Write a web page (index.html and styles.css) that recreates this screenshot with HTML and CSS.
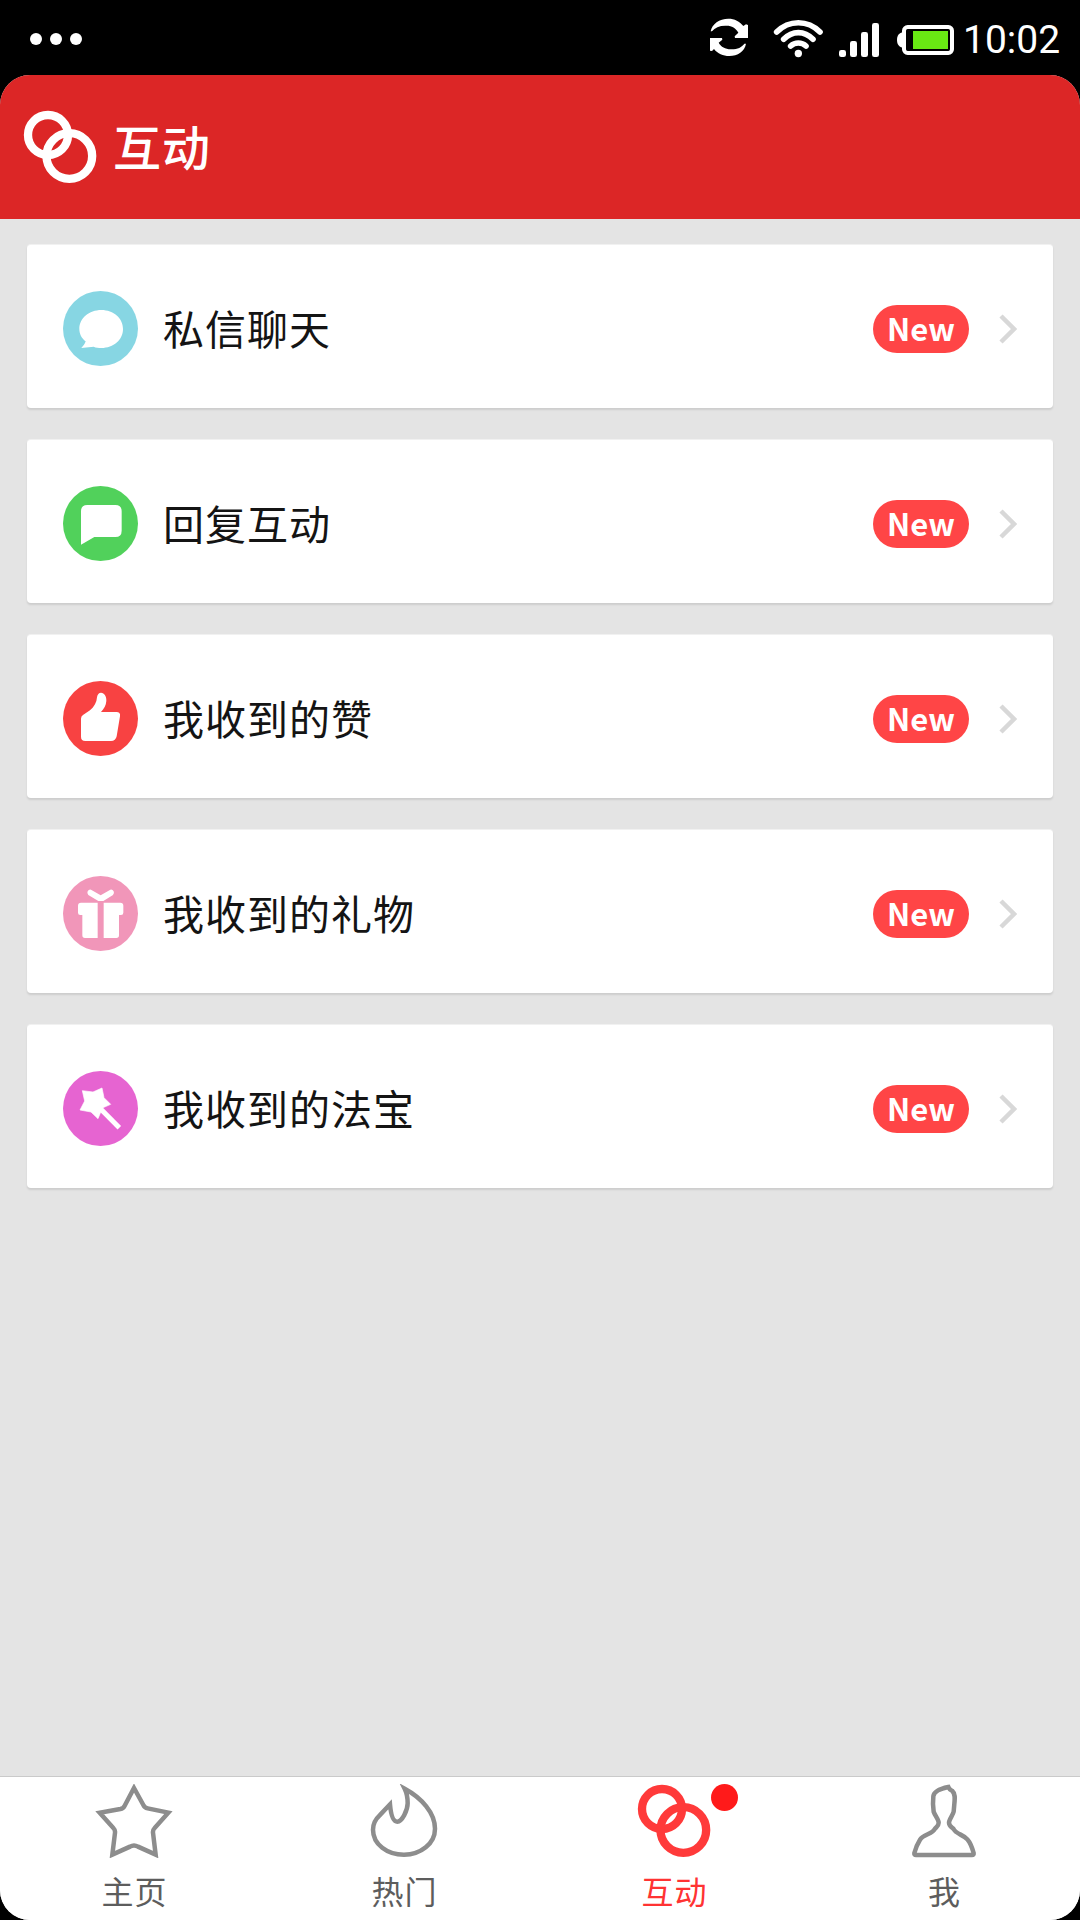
FILE: index.html
```html
<!DOCTYPE html>
<html lang="zh-CN">
<head>
<meta charset="utf-8">
<title>互动</title>
<link rel="stylesheet" href="styles.css">
</head>
<body>
<div class="screen">
  <div class="status">
    <div class="dots"><i></i><i></i><i></i></div>
    <div class="tray">
      <svg class="sync" viewBox="57 54 120 120" fill="#fff">
        <path d="M62 94C66 72 88 56 115 56C134 56 149 64 160 78L168 73L174 75V114H135L134 109L145 98C137 84 126 77 110 77C90 76 75 82 66 94Z"/>
        <path d="M168 131C164 154 143 168 118 168C99 168 83 161 72 147L66 153L60 152V114H96L97 119L86 128C93 141 106 147 122 148C141 149 155 142 163 131Z"/>
      </svg>
      <svg class="wifi" viewBox="249 54 153 120" fill="none" stroke="#fff" stroke-width="17" stroke-linecap="round">
        <path d="M260 96C297 59 353 59 390 96"/>
        <path d="M281 118C307 91 343 91 369 118"/>
        <path d="M302 138C315 126 335 126 348 138"/>
        <circle cx="325" cy="160.500" r="11" fill="#fff" stroke="none"/>
      </svg>
      <svg class="signal" viewBox="444 54 126 120" fill="#fff">
        <rect x="447" y="150" width="21" height="21" rx="7"/>
        <rect x="480" y="123" width="21" height="48" rx="7"/>
        <rect x="513" y="96" width="21" height="75" rx="7"/>
        <rect x="546" y="69" width="21" height="102" rx="7"/>
      </svg>
      <svg class="battery" viewBox="618 54 177 120">
        <path d="M640 97C627 98 621 107 621 120S627 142 640 143Z" fill="#fff"/>
        <rect x="642" y="81" width="144" height="78" rx="11" fill="#000" stroke="#fff" stroke-width="12"/>
        <rect x="669" y="93" width="105" height="54" fill="#69e813"/>
      </svg>
      <span class="clock">10:02</span>
    </div>
  </div>

  <div class="app">
    <header class="header">
      <svg class="logo" viewBox="66 327 228 228" fill="none" stroke="#fff" stroke-width="25">
        <circle cx="144" cy="405" r="60"/>
        <circle cx="208" cy="468" r="68.500"/>
      </svg>
      <h1>互动</h1>
    </header>

    <main class="list">
      <div class="card">
        <svg class="icon" viewBox="189 183 225 225">
          <circle cx="301.500" cy="295.500" r="112.500" fill="#87d6e3"/>
          <path d="M304 240C341 240 369 265 369 297S341 354 304 354C296 354 288 353 281 350L244 354C250 348 255 341 257 334C245 325 238 312 238 297C238 265 267 240 304 240Z" fill="#fff"/>
        </svg>
        <span class="label">私信聊天</span>
        <span class="badge">New</span>
        <svg class="chevron" viewBox="0 0 18 30"><path d="M2 2L15 15L2 28"/></svg>
      </div>
      <div class="card">
        <svg class="icon" viewBox="69 78 225 225">
          <circle cx="181.500" cy="190.500" r="112.500" fill="#51d15b"/>
          <path d="M142 135H226Q245 135 245 154V212Q245 231 226 231H163L123 254V154Q123 135 142 135Z" fill="#fff"/>
        </svg>
        <span class="label">回复互动</span>
        <span class="badge">New</span>
        <svg class="chevron" viewBox="0 0 18 30"><path d="M2 2L15 15L2 28"/></svg>
      </div>
      <div class="card">
        <svg class="icon" viewBox="69 63 225 225">
          <circle cx="181.500" cy="175.500" r="112.500" fill="#f84242"/>
          <path d="M123 176Q123 169 129 165L150 151C163 140 170 128 171 112C172 103 177 98 183 98C193 98 200 109 199 123C198 137 192 146 183 156H229Q242 156 240 169L230 229Q227 243 213 243H136Q123 243 123 230Z" fill="#fff"/>
        </svg>
        <span class="label">我收到的赞</span>
        <span class="badge">New</span>
        <svg class="chevron" viewBox="0 0 18 30"><path d="M2 2L15 15L2 28"/></svg>
      </div>
      <div class="card">
        <svg class="icon" viewBox="69 78 225 225">
          <circle cx="181.500" cy="190.500" r="112.500" fill="#f196b9"/>
          <g fill="#fff">
            <path d="M123 158H173V264H135Q127 264 127 256V195H121Q114 195 114 188V167Q114 158 123 158Z"/>
            <path d="M191 158H241Q250 158 250 167V188Q250 195 243 195H237V256Q237 264 229 264H191Z"/>
            <path d="M153 119L182 136L211 119Q217 117 221 124Q224 131 219 135L190 153H175L145 135Q140 131 143 124Q147 117 153 119Z"/>
          </g>
        </svg>
        <span class="label">我收到的礼物</span>
        <span class="badge">New</span>
        <svg class="chevron" viewBox="0 0 18 30"><path d="M2 2L15 15L2 28"/></svg>
      </div>
      <div class="card">
        <svg class="icon" viewBox="69 63 225 225">
          <circle cx="181.500" cy="175.500" r="112.500" fill="#e664d1"/>
          <g fill="#fff" stroke="#fff" stroke-linejoin="round">
            <path d="M127 122L159 126L186 114L192 143L212 163L187 174L174 206L153 186L120 180L134 153Z" stroke-width="2"/>
            <path d="M180 175L238 233" stroke-width="15"/>
          </g>
        </svg>
        <span class="label">我收到的法宝</span>
        <span class="badge">New</span>
        <svg class="chevron" viewBox="0 0 18 30"><path d="M2 2L15 15L2 28"/></svg>
      </div>
    </main>

    <nav class="tabs">
      <div class="tab">
        <svg class="tab-icon" viewBox="105 72 240 222">
          <path d="M222 84L250 135Q254 143 263 145L325 158L284 204Q278 210 279 218L287 284L234 260Q222 253 210 260L157 284L165 218Q166 210 160 204L119 158L181 147Q190 145 194 137Z"/>
        </svg>
        <span>主页</span>
      </div>
      <div class="tab">
        <svg class="tab-icon" viewBox="915 72 240 222">
          <path d="M1034 86C1084 113 1125 158 1125 206C1125 251 1082 284 1032 284S939 253 939 209C939 189 948 176 959 166L990 133C992 156 996 185 1012 185C1026 185 1043 151 1043 130C1043 113 1040 98 1034 86Z"/>
        </svg>
        <span>热门</span>
      </div>
      <div class="tab active">
        <svg class="tab-icon rings" viewBox="105 72 240 222">
          <circle cx="186" cy="147" r="60"/>
          <circle cx="250" cy="210" r="68.500"/>
        </svg>
        <b class="dot"></b>
        <span>互动</span>
      </div>
      <div class="tab">
        <svg class="tab-icon" viewBox="915 72 240 222">
          <path d="M1045 81C1020 86 1002 93 1000 109L999 132L1001 155C1005 167 1016 178 1016 188C1016 197 1010 200 1005 206C998 223 971 222 960 239C951 253 947 265 943 279Q942 285 948 285H1116Q1122 285 1121 279C1117 265 1111 248 1103 239C1090 223 1068 223 1060 206C1053 200 1047 197 1047 188C1047 178 1059 165 1061 155L1063 132C1065 113 1066 101 1057 93Q1048 89 1045 81Z"/>
        </svg>
        <span>我</span>
      </div>
    </nav>
  </div>
</div>
</body>
</html>
```

FILE: styles.css
```css
* { box-sizing: border-box; }

body {
  margin: 0;
  background: #000;
  font-family: "Noto Sans CJK SC", sans-serif;
}

svg { display: block; flex: none; }

.screen {
  width: 1080px;
  height: 1920px;
  display: flex;
  flex-direction: column;
  overflow: hidden;
}

/* Status bar */
.status {
  height: 75px;
  flex: none;
  padding: 0 19px 0 30px;
  display: flex;
  justify-content: space-between;
}
.dots { display: flex; gap: 8px; padding-top: 33px; }
.dots i { width: 12px; height: 12px; border-radius: 50%; background: #fff; }
.tray { display: flex; padding-top: 18px; height: 58px; }
.sync { width: 40px; height: 40px; margin-right: 24px; }
.wifi { width: 51px; height: 40px; margin-right: 14px; }
.signal { width: 42px; height: 40px; margin-right: 16px; }
.battery { width: 59px; height: 40px; }
.clock {
  width: 106px;
  padding-left: 8px;
  font: 400 39px/45px Roboto, sans-serif;
  color: #fff;
  white-space: nowrap;
}

/* App window */
.app {
  flex: 1;
  display: flex;
  flex-direction: column;
  border-radius: 30px;
  overflow: hidden;
  background: #e4e4e4;
}
.header {
  height: 144px;
  flex: none;
  display: flex;
  align-items: center;
  gap: 15px;
  padding: 0 22px;
  background: #dc2626;
  color: #fff;
}
.logo { width: 76px; height: 76px; }
.header h1 {
  margin: 0 0 4px;
  font-size: 48px;
  font-weight: 500;
  line-height: 70px;
  letter-spacing: 1px;
}

/* Cards */
.list {
  flex: 1;
  padding: 25px 27px 0;
  display: flex;
  flex-direction: column;
  gap: 31px;
}
.card {
  height: 164px;
  padding: 5px 36px 0;
  display: flex;
  align-items: center;
  border-radius: 4px;
  border-top: 1px solid #f1f1f1;
  background: #fff;
  box-shadow: 0 2px 2px rgba(0, 0, 0, .1);
}
.icon { width: 75px; height: 75px; margin-bottom: 2px; }
.label {
  flex: 1;
  margin: 0 0 4px 25px;
  font-size: 41px;
  line-height: 60px;
  letter-spacing: 1px;
  color: #141414;
}
.badge {
  width: 96px;
  height: 48px;
  border-radius: 24px;
  background: #ff4546;
  color: #fff;
  font-size: 31px;
  font-weight: 700;
  line-height: 45px;
  text-align: center;
}
.chevron {
  width: 18px;
  height: 30px;
  margin-left: 30px;
  fill: none;
  stroke: #d8d8d8;
  stroke-width: 4.500;
}

/* Bottom tabs */
.tabs {
  height: 144px;
  flex: none;
  display: flex;
  border-top: 1px solid #cacaca;
  background: #fff;
}
.tab {
  flex: 1;
  position: relative;
  display: flex;
  flex-direction: column;
  align-items: center;
  padding-top: 7px;
  font-size: 32px;
  line-height: 48px;
  letter-spacing: 1px;
  color: #5d5d5d;
}
.tab span { margin: 8px 1px 0 0; }
.tab-icon { width: 80px; height: 74px; fill: none; stroke: #8d8d8d; stroke-width: 13.500; }
.rings { stroke: #ff3a3a; stroke-width: 25; }
.active { color: #ff3333; }
.dot {
  position: absolute;
  left: 171px;
  top: 7px;
  width: 27px;
  height: 27px;
  border-radius: 50%;
  background: #ff1a1a;
}
```
